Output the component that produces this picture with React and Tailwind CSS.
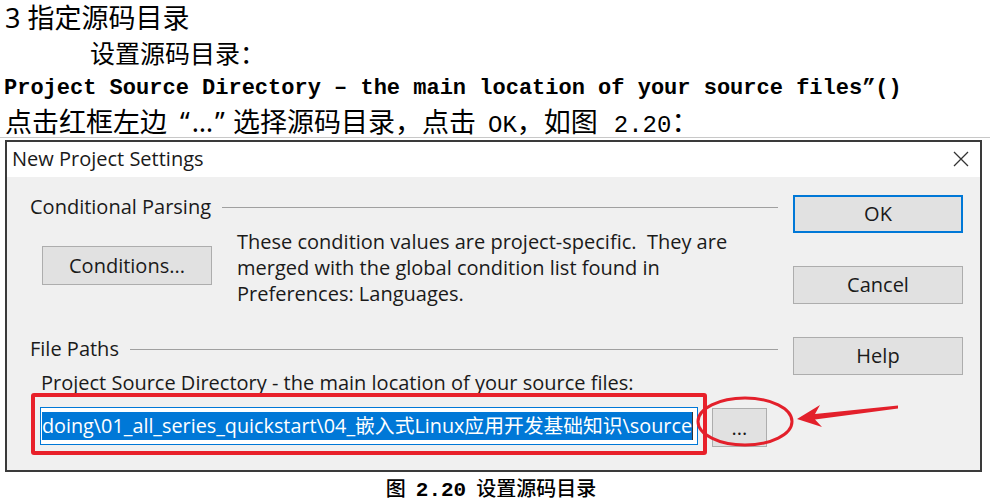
import React from "react";

const cjk = "font-['Noto_Sans_CJK_SC',sans-serif]";
const mixed = "font-['Noto_Sans','Noto_Sans_CJK_SC',sans-serif]";
const mono = "font-['Liberation_Mono','Noto_Sans_CJK_SC',monospace]";
const ui = "font-['Open_Sans','Noto_Sans_CJK_SC',sans-serif]";

const WinButton = ({ children, primary, className = "" }) => (
	<div
		className={`flex items-center justify-center bg-[#e1e1e1] text-[20px] text-[#1a1a1a] ${
			primary ? "border-2 border-[#0078d7]" : "border border-[#adadad]"
		} ${className}`}
	>
		{children}
	</div>
);

const GroupTitle = ({ children }) => (
	<div className="flex h-[24px] items-center">
		<span className="text-[20px] text-[#1a1a1a]">{children}</span>
		<div className="ml-[11px] h-px flex-1 bg-[#a0a0a0]" />
	</div>
);

const Annotations = () => (
	<>
		{/* red box round the path field */}
		<div className="absolute left-[31px] top-[393px] h-[62px] w-[676px] rounded-[3px] border-4 border-[#e8202a]" />
		{/* ellipse and arrow at the browse button */}
		<svg
			className="absolute left-[690px] top-[390px]"
			width="220"
			height="70"
			viewBox="0 0 220 70"
		>
			<ellipse
				cx="55"
				cy="31.5"
				rx="47"
				ry="23.5"
				fill="none"
				stroke="#e3202b"
				strokeWidth="3"
			/>
			<path
				d="M107 29 L130 15 L125 24 L208 15.5 L208 18.5 L125 29.5 L132 37 Z"
				fill="#e3202b"
			/>
		</svg>
	</>
);

export default function App() {
	return (
		<div className="relative h-[503px] w-[990px] overflow-hidden bg-white text-black">
			{/* document text above the screenshot */}
			<div className={`flex h-[36px] items-center pl-[5px] text-[27px] ${mixed}`}>
				3 指定源码目录
			</div>
			<div className={`flex h-[34px] items-center pl-[90px] text-[25px] ${cjk}`}>
				设置源码目录：
			</div>
			<div className={`flex h-[35px] items-center pl-[4px] pt-[2px] text-[22px] font-bold ${mono}`}>
				Project Source Directory – the main location of your source files”()
			</div>
			<div className={`h-[32px] whitespace-pre pl-[5px] text-[27px] leading-[32px] ${cjk}`}>
				点击红框左边
				<span className={`inline-block w-[66px] pl-[13px] tracking-[2px] ${mixed}`}>“…”</span>
				选择源码目录，点击
				<span className={`ml-[12px] text-[24px] ${mono}`}>OK</span>，如图
				<span className={`ml-[16px] text-[24px] ${mono}`}>2.20</span>：
			</div>
			<div className="h-px bg-[#c8c8c8]" />

			{/* dialog */}
			<div className={`ml-[5px] mt-[2px] w-[977px] border-2 border-[#3a3a3a] ${ui}`}>
				<div className="flex h-[35px] items-center justify-between bg-white pb-[2px] pl-[5px] pr-[10px]">
					<span className="text-[20px] text-[#1a1a1a]">New Project Settings</span>
					<svg width="18" height="18" viewBox="0 0 18 18">
						<path d="M2 2 L16 16 M16 2 L2 16" stroke="#333" strokeWidth="1.3" />
					</svg>
				</div>
				<div className="flex h-[293px] bg-[#f0f0f0] pl-[23px] pr-[17px]">
					<div className="flex flex-1 flex-col pt-[18px]">
						<GroupTitle>Conditional Parsing</GroupTitle>
						<div className="mt-[10px] flex items-start">
							<WinButton className="ml-[12px] mt-[17px] h-[39px] w-[170px]">
								Conditions...
							</WinButton>
							<div className="ml-[25px] text-[20px] leading-[26px] text-[#1a1a1a]">
								These condition values are project-specific.&nbsp; They are
								<br />
								merged with the global condition list found in
								<br />
								Preferences: Languages.
							</div>
						</div>
						<div className="mt-[30px]">
							<GroupTitle>File Paths</GroupTitle>
						</div>
						<div className="mt-[11px] flex h-[22px] items-center pl-[11px] text-[20px] text-[#1a1a1a]">
							Project Source Directory - the main location of your source files:
						</div>
						<div className="mt-[13px] flex items-start">
							<div className="ml-[10px] flex h-[38px] w-[658px] items-center justify-end overflow-hidden border border-[#0078d7] bg-white px-[4px]">
								<span className="whitespace-nowrap bg-[#0078d7] text-[19.8px] leading-[28px] text-white">
									doing\01_all_series_quickstart\04_嵌入式Linux应用开发基础知识\source
								</span>
								<span className="h-[28px] w-px shrink-0 bg-[#333]" />
							</div>
							<WinButton className="ml-[14px] mt-[1px] h-[39px] w-[55px] text-[16px]">
								...
							</WinButton>
						</div>
					</div>
					<div className="ml-[15px] flex w-[170px] flex-col gap-[33px] pt-[18px]">
						<WinButton primary className="h-[38px]">
							OK
						</WinButton>
						<WinButton className="h-[38px]">Cancel</WinButton>
						<WinButton className="h-[38px]">Help</WinButton>
					</div>
				</div>
			</div>

			{/* caption */}
			<div className={`h-[31px] pr-[8px] text-center text-[20px] font-medium leading-[31px] ${cjk}`}>
				图<span className={`mx-[10px] text-[21px] font-bold ${mono}`}>2.20</span>设置源码目录
			</div>

			<Annotations />
		</div>
	);
}
